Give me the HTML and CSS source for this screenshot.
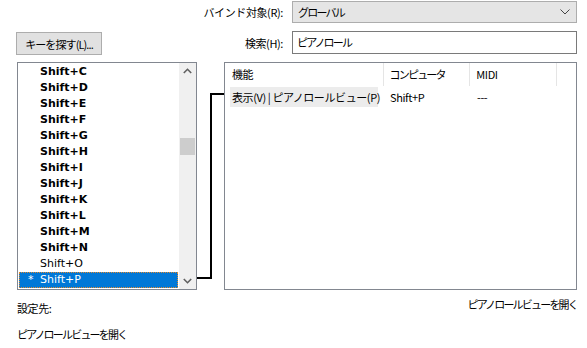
FILE: index.html
```html
<!DOCTYPE html>
<html lang="ja">
<head>
<meta charset="utf-8">
<link rel="stylesheet" href="styles.css">
</head>
<body>
<div class="app">
  <div class="row row-bind">
    <span class="label">バインド対象(R):</span>
    <div class="combo">
      <span class="combo-text k">グローバル</span>
      <svg class="chev" width="10" height="6" viewBox="0 0 10 6"><path d="M0.5 0.5 L5 5 L9.5 0.5" fill="none" stroke="#444" stroke-width="1"/></svg>
    </div>
  </div>
  <div class="row row-search">
    <button class="btn">キーを探す(L)...</button>
    <div class="search-group">
      <span class="label">検索(H):</span>
      <div class="input"><span class="k">ピアノロール</span></div>
    </div>
  </div>
  <div class="main">
    <div class="keylist">
      <div class="items">
        <div class="item bold">Shift+C</div>
        <div class="item bold">Shift+D</div>
        <div class="item bold">Shift+E</div>
        <div class="item bold">Shift+F</div>
        <div class="item bold">Shift+G</div>
        <div class="item bold">Shift+H</div>
        <div class="item bold">Shift+I</div>
        <div class="item bold">Shift+J</div>
        <div class="item bold">Shift+K</div>
        <div class="item bold">Shift+L</div>
        <div class="item bold">Shift+M</div>
        <div class="item bold">Shift+N</div>
        <div class="item">Shift+O</div>
        <div class="item selected"><span class="mark">*</span>Shift+P</div>
      </div>
      <div class="vscroll">
        <svg class="arrow" width="9" height="6" viewBox="0 0 9 6"><path d="M0.8 5 L4.5 1.3 L8.2 5" fill="none" stroke="#606060" stroke-width="1.6"/></svg>
        <div class="track"><div class="thumb"></div></div>
        <svg class="arrow" width="9" height="6" viewBox="0 0 9 6"><path d="M0.8 1 L4.5 4.7 L8.2 1" fill="none" stroke="#606060" stroke-width="1.6"/></svg>
      </div>
    </div>
    <svg class="connector" width="27" height="228" viewBox="0 0 27 228"><polyline points="0,216 14,216 14,32 27,32" fill="none" stroke="#000" stroke-width="2"/></svg>
    <div class="panel">
      <div class="thead">
        <div class="th c1">機能</div>
        <div class="th c2"><span class="k">コンピュータ</span></div>
        <div class="th c3">MIDI</div>
        <div class="th c4"></div>
      </div>
      <div class="tr">
        <div class="td c1"><span class="hl">表示(V) | ピアノロールビュー(P)</span></div>
        <div class="td c2">Shift+P</div>
        <div class="td c3">---</div>
      </div>
    </div>
  </div>
  <div class="footer">
    <span class="label">設定先:</span>
    <span class="label k">ピアノロールビューを開く</span>
  </div>
  <div class="desc k">ピアノロールビューを開く</div>
</div>
</body>
</html>
```
FILE: styles.css
```css
html, body {
  margin: 0;
  padding: 0;
  background: #fff;
}
body {
  width: 587px;
  height: 348px;
  overflow: hidden;
  font-family: "Noto Sans CJK JP", "Noto Sans", sans-serif;
  font-size: 11px;
  letter-spacing: -0.4px;
  color: #000;
}
.k {
  letter-spacing: -1.8px;
}
.app {
  display: flex;
  flex-direction: column;
  padding: 1px 10px 0 16px;
}
.row {
  display: flex;
  align-items: center;
}
.row-bind {
  justify-content: flex-end;
  height: 22px;
}
.label {
  line-height: 16px;
  white-space: nowrap;
}
.row-bind .label,
.search-group .label {
  margin-right: 9px;
}
.combo {
  box-sizing: border-box;
  width: 285px;
  height: 22px;
  background: #e5e5e5;
  border: 1px solid #adadad;
  display: flex;
  align-items: center;
  justify-content: space-between;
  padding: 0 6px 0 5px;
}
.combo-text {
  line-height: 16px;
}
.row-search {
  margin-top: 8px;
  justify-content: space-between;
  height: 24px;
  align-items: flex-start;
}
.btn {
  box-sizing: border-box;
  width: 86px;
  height: 23px;
  margin-top: 1px;
  background: #e1e1e1;
  border: 1px solid #adadad;
  font-family: "Noto Sans CJK JP", "Noto Sans", sans-serif;
  font-size: 11px;
  letter-spacing: -0.9px;
  line-height: 16px;
  padding: 0;
  color: #000;
  white-space: nowrap;
}
.search-group {
  display: flex;
  align-items: center;
}
.input {
  box-sizing: border-box;
  width: 285px;
  height: 23px;
  border: 1px solid #7a7a7a;
  background: #fff;
  padding: 0 4px;
  line-height: 20px;
}
.main {
  display: flex;
  margin-top: 7px;
  margin-left: 1px;
  height: 228px;
}
.keylist {
  box-sizing: border-box;
  width: 180px;
  height: 228px;
  border: 1px solid #828790;
  display: flex;
}
.items {
  flex: 1;
  padding-top: 1px;
  overflow: hidden;
}
.item {
  height: 16px;
  line-height: 16px;
  padding-left: 22px;
  font-family: "DejaVu Sans", sans-serif;
  font-size: 11px;
  letter-spacing: 0;
  color: #000;
  white-space: nowrap;
}
.item.bold {
  font-weight: bold;
}
.item.selected {
  box-sizing: border-box;
  margin-left: 1px;
  width: 159px;
  padding-left: 0;
  background: #0078d7;
  color: #fff;
  border: 1px dotted #e08a30;
  line-height: 14px;
}
.mark {
  display: inline-block;
  width: 20px;
  padding-left: 8px;
  box-sizing: border-box;
}
.vscroll {
  width: 17px;
  background: #f0f0f0;
  display: flex;
  flex-direction: column;
  align-items: center;
}
.arrow {
  margin: 5px 0 6px;
  flex: none;
}
.vscroll .arrow:last-child {
  margin: 6px 0 5px;
}
.track {
  flex: 1;
  width: 100%;
  display: flex;
  justify-content: center;
}
.thumb {
  margin-top: 58px;
  width: 15px;
  height: 17px;
  background: #cdcdcd;
}
.connector {
  flex: none;
  display: block;
}
.panel {
  box-sizing: border-box;
  width: 353px;
  height: 228px;
  border: 1px solid #828790;
  padding-left: 5px;
}
.thead, .tr {
  display: flex;
}
.thead {
  height: 23px;
}
.th {
  box-sizing: border-box;
  height: 23px;
  line-height: 23px;
  padding-left: 2px;
  border-right: 1px solid #e5e5e5;
}
.c1 { width: 154px; }
.c2 { width: 87px; padding-left: 6px; }
.c3 { width: 87px; padding-left: 6px; }
.c4 { width: 19px; border-right: none; }
.tr {
  height: 21px;
  margin-top: 1px;
}
.td {
  box-sizing: border-box;
  line-height: 20px;
}
.td.c1 {
  padding-left: 0;
}
.hl {
  display: block;
  width: 148px;
  height: 20px;
  background: #ececec;
  padding-left: 2px;
  box-sizing: border-box;
  white-space: nowrap;
}
.footer {
  display: flex;
  justify-content: space-between;
  align-items: flex-start;
  margin-top: 6px;
  margin-left: 1px;
}
.footer .label:first-child {
  margin-top: 4px;
}
.desc {
  margin-top: 10px;
  margin-left: 1px;
  line-height: 16px;
}
```
